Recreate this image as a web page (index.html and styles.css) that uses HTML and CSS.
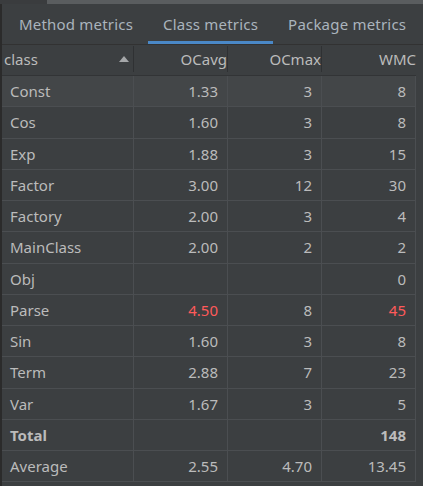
FILE: index.html
```html
<!DOCTYPE html>
<html>
<head>
<meta charset="utf-8">
<link rel="stylesheet" href="styles.css">
</head>
<body>
<div class="frame">
  <div class="topbar"><div class="thumb"></div></div>
  <div class="main">
    <div class="tabs">
      <div class="tab">Method metrics</div>
      <div class="tab active">Class metrics</div>
      <div class="tab">Package metrics</div>
    </div>
    <div class="table">
      <div class="row head">
        <div class="cell name">class<span class="sort"></span></div>
        <div class="cell">OCavg</div>
        <div class="cell">OCmax</div>
        <div class="cell last">WMC</div>
      </div>
      <div class="row sel"><div class="cell name">Const</div><div class="cell">1.33</div><div class="cell">3</div><div class="cell">8</div></div>
      <div class="row"><div class="cell name">Cos</div><div class="cell">1.60</div><div class="cell">3</div><div class="cell">8</div></div>
      <div class="row"><div class="cell name">Exp</div><div class="cell">1.88</div><div class="cell">3</div><div class="cell">15</div></div>
      <div class="row"><div class="cell name">Factor</div><div class="cell">3.00</div><div class="cell">12</div><div class="cell">30</div></div>
      <div class="row"><div class="cell name">Factory</div><div class="cell">2.00</div><div class="cell">3</div><div class="cell">4</div></div>
      <div class="row"><div class="cell name">MainClass</div><div class="cell">2.00</div><div class="cell">2</div><div class="cell">2</div></div>
      <div class="row"><div class="cell name">Obj</div><div class="cell"></div><div class="cell"></div><div class="cell">0</div></div>
      <div class="row"><div class="cell name">Parse</div><div class="cell red">4.50</div><div class="cell">8</div><div class="cell red">45</div></div>
      <div class="row"><div class="cell name">Sin</div><div class="cell">1.60</div><div class="cell">3</div><div class="cell">8</div></div>
      <div class="row"><div class="cell name">Term</div><div class="cell">2.88</div><div class="cell">7</div><div class="cell">23</div></div>
      <div class="row"><div class="cell name">Var</div><div class="cell">1.67</div><div class="cell">3</div><div class="cell">5</div></div>
      <div class="row bold"><div class="cell name">Total</div><div class="cell"></div><div class="cell"></div><div class="cell">148</div></div>
      <div class="row"><div class="cell name">Average</div><div class="cell">2.55</div><div class="cell">4.70</div><div class="cell">13.45</div></div>
    </div>
  </div>
</div>
</body>
</html>
```

FILE: styles.css
```css
* { box-sizing: border-box; }
html, body {
  margin: 0;
  padding: 0;
  background: #3c3f41;
}
body {
  font-family: "Noto Sans", "Open Sans", sans-serif;
  font-size: 15px;
  color: #bbbbbb;
}
.frame {
  width: 423px;
  height: 486px;
  overflow: hidden;
  background: #3c3f41;
}
.topbar {
  height: 4px;
  background: #3a3c3e;
  padding-left: 47px;
}
.thumb {
  height: 4px;
  background: #5a5d5f;
}
.main {
  border-left: 2px solid #2b2b2b;
  height: 482px;
}
.tabs {
  display: flex;
  height: 41px;
  padding-left: 2px;
  border-bottom: 1px solid #323232;
}
.tab {
  padding: 0 15px;
  line-height: 40px;
  height: 40px;
  color: #aab4bd;
  letter-spacing: 0.2px;
  border-bottom: 3px solid transparent;
  white-space: nowrap;
}
.tab.active {
  border-bottom-color: #4a88c7;
}
.table {
  width: 414px;
}
.row {
  display: grid;
  grid-template-columns: 132px 94px 94px 94px;
  height: 31.25px;
  border-bottom: 1px solid #4b4e51;
}
.row.head {
  height: 31px;
  border-bottom: 1px solid #323436;
}
.row.sel {
  background: #434648;
}
.cell {
  border-right: 1px solid #4b4e51;
  text-align: right;
  padding-right: 9px;
  display: flex;
  align-items: center;
  justify-content: flex-end;
  white-space: nowrap;
}
.cell.name {
  justify-content: flex-start;
  padding-left: 8px;
}
.head .cell {
  border-right: 1px solid #2f3133;
  padding-right: 0;
  margin: 1px 0 3px;
}
.head .cell.last {
  border-right: none;
}
.head .cell.name {
  padding-left: 2px;
  justify-content: space-between;
  padding-right: 4px;
}
.sort {
  width: 0;
  height: 0;
  border-left: 5px solid transparent;
  border-right: 5px solid transparent;
  border-bottom: 6px solid #a5a7a9;
}
.red { color: #ff5a5a; }
.bold { font-weight: bold; }
```
